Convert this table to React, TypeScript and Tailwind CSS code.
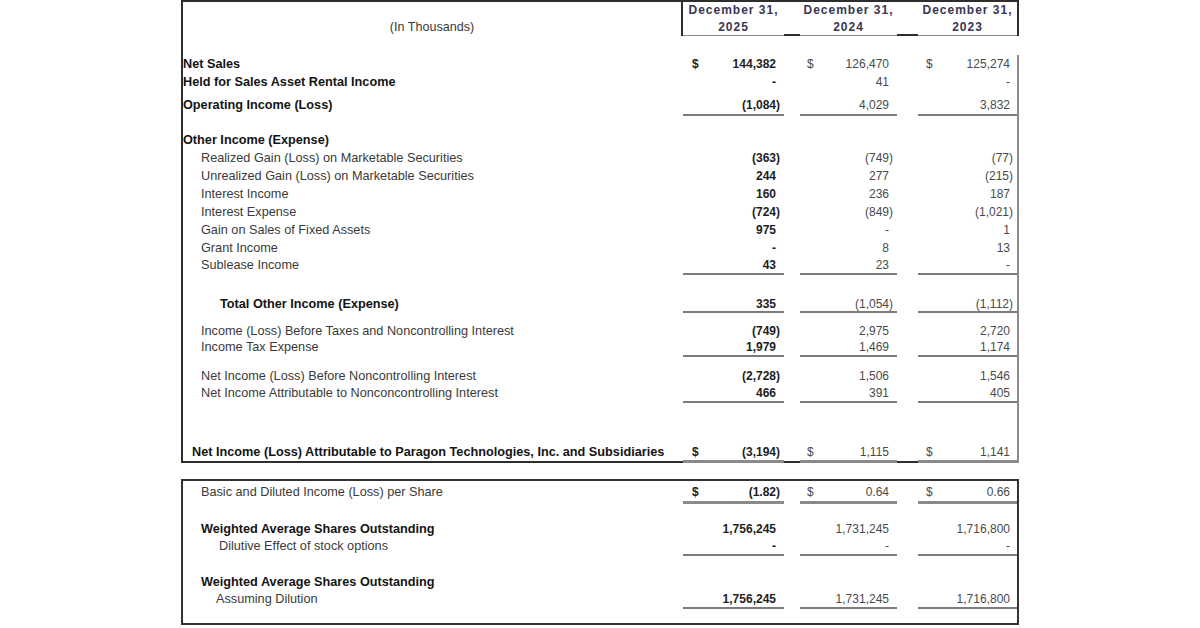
type Line = 'none' | 'single' | 'thick' | 'boxed'

interface RowDef {
  label: string
  pl: string
  bold?: boolean
  values?: [string, string, string]
  dollar?: boolean
  line?: Line
  mt: string
  lh: string
}

const upperRows: RowDef[] = [
  { label: 'Net Sales', pl: 'pl-0', bold: true, values: ['144,382', '126,470', '125,274'], dollar: true, mt: 'mt-[19px]', lh: 'leading-[18px]' },
  { label: 'Held for Sales Asset Rental Income', pl: 'pl-0', bold: true, values: ['-', '41', '-'], mt: 'mt-0', lh: 'leading-[18px]' },
  { label: 'Operating Income (Loss)', pl: 'pl-0', bold: true, values: ['(1,084)', '4,029', '3,832'], line: 'single', mt: 'mt-[5px]', lh: 'leading-[18px]' },
  { label: 'Other Income (Expense)', pl: 'pl-0', bold: true, mt: 'mt-[15px]', lh: 'leading-[18px]' },
  { label: 'Realized Gain (Loss) on Marketable Securities', pl: 'pl-[18px]', values: ['(363)', '(749)', '(77)'], mt: 'mt-0', lh: 'leading-[18px]' },
  { label: 'Unrealized Gain (Loss) on Marketable Securities', pl: 'pl-[18px]', values: ['244', '277', '(215)'], mt: 'mt-0', lh: 'leading-[18px]' },
  { label: 'Interest Income', pl: 'pl-[18px]', values: ['160', '236', '187'], mt: 'mt-0', lh: 'leading-[18px]' },
  { label: 'Interest Expense', pl: 'pl-[18px]', values: ['(724)', '(849)', '(1,021)'], mt: 'mt-0', lh: 'leading-[18px]' },
  { label: 'Gain on Sales of Fixed Assets', pl: 'pl-[18px]', values: ['975', '-', '1'], mt: 'mt-0', lh: 'leading-[18px]' },
  { label: 'Grant Income', pl: 'pl-[18px]', values: ['-', '8', '13'], mt: 'mt-0', lh: 'leading-[18px]' },
  { label: 'Sublease Income', pl: 'pl-[18px]', values: ['43', '23', '-'], line: 'single', mt: 'mt-0', lh: 'leading-[16px]' },
  { label: 'Total Other Income (Expense)', pl: 'pl-[37px]', bold: true, values: ['335', '(1,054)', '(1,112)'], line: 'single', mt: 'mt-[22px]', lh: 'leading-[14px]' },
  { label: 'Income (Loss) Before Taxes and Noncontrolling Interest', pl: 'pl-[18px]', values: ['(749)', '2,975', '2,720'], mt: 'mt-[9px]', lh: 'leading-[18px]' },
  { label: 'Income Tax Expense', pl: 'pl-[18px]', values: ['1,979', '1,469', '1,174'], line: 'single', mt: 'mt-0', lh: 'leading-[15px]' },
  { label: 'Net Income (Loss) Before Noncontrolling Interest', pl: 'pl-[18px]', values: ['(2,728)', '1,506', '1,546'], mt: 'mt-[10px]', lh: 'leading-[18px]' },
  { label: 'Net Income Attributable to Nonconcontrolling Interest', pl: 'pl-[18px]', values: ['466', '391', '405'], line: 'single', mt: 'mt-0', lh: 'leading-[16px]' },
  { label: 'Net Income (Loss) Attributable to Paragon Technologies, Inc. and Subsidiaries', pl: 'pl-[9px]', bold: true, values: ['(3,194)', '1,115', '1,141'], dollar: true, line: 'boxed', mt: 'mt-[42px]', lh: 'leading-[15px]' },
]

const lowerRows: RowDef[] = [
  { label: 'Basic and Diluted Income (Loss) per Share', pl: 'pl-[18px]', values: ['(1.82)', '0.64', '0.66'], dollar: true, line: 'thick', mt: 'mt-[2px]', lh: 'leading-[18px]' },
  { label: 'Weighted Average Shares Outstanding', pl: 'pl-[18px]', bold: true, values: ['1,756,245', '1,731,245', '1,716,800'], mt: 'mt-[16px]', lh: 'leading-[18px]' },
  { label: 'Dilutive Effect of stock options', pl: 'pl-[36px]', values: ['-', '-', '-'], line: 'single', mt: 'mt-0', lh: 'leading-[16px]' },
  { label: 'Weighted Average Shares Outstanding', pl: 'pl-[18px]', bold: true, mt: 'mt-[17px]', lh: 'leading-[18px]' },
  { label: 'Assuming Dilution', pl: 'pl-[33px]', values: ['1,756,245', '1,731,245', '1,716,800'], line: 'single', mt: 'mt-0', lh: 'leading-[16px]' },
]

const cols = [
  { w: 'w-[101px] pl-[9px] pr-[4px]', pos: 'pr-[4px]', text: 'font-bold text-[#1e1e1e]' },
  { w: 'w-[97px] pl-[7px] pr-[4px]', pos: 'pr-[4px]', text: 'text-[#4a4a4a]' },
  { w: 'w-[99px] pl-[8px] pr-[4px]', pos: 'pr-[3px]', text: 'text-[#4a4a4a]' },
]

function lineClass(line: Line) {
  if (line === 'single') return 'border-b-2 border-[#7c7c7c]'
  if (line === 'thick' || line === 'boxed') return 'border-b-[3px] border-[#8a8a8a]'
  return ''
}

function Row({ row }: { row: RowDef }) {
  const line = row.line ?? 'none'
  const boxed = line === 'boxed'
  const gap = boxed ? 'border-b-2 border-[#2e2e2e]' : ''
  return (
    <div className={`flex ${row.mt} ${row.lh}`}>
      <div
        className={`w-[500px] text-[12.7px] whitespace-nowrap ${row.pl} ${boxed ? 'border-b-2 border-[#2e2e2e]' : ''} ${
          row.bold ? 'font-bold text-[#141414]' : 'text-[#3a3a3a]'
        }`}
      >
        {row.label}
      </div>
      {cols.map((c, i) => {
        const v = row.values?.[i]
        const neg = v?.startsWith('(')
        return (
          <div key={i} className="flex">
            <div className={`${c.w} ${c.text} flex justify-between ${row.values ? lineClass(line) : ''}`}>
              <span>{row.dollar ? '$' : ''}</span>
              <span className={neg ? '' : c.pos}>{v ?? ''}</span>
            </div>
            {i === 0 && <div className={`w-[16px] ${gap}`} />}
            {i === 1 && <div className={`w-[21px] ${gap}`} />}
          </div>
        )
      })}
    </div>
  )
}

function HeaderCell({ year, w }: { year: string; w: string }) {
  return (
    <div className={`${w} flex flex-col items-center border-b border-[#8a8a8a] font-bold text-[#3a3552] tracking-[1px]`}>
      <span className="leading-[17px]">December 31,</span>
      <span className="leading-[16px]">{year}</span>
    </div>
  )
}

export default function App() {
  return (
    <div className="w-[1200px] h-[628px] bg-white overflow-hidden font-['Liberation_Sans',Arial,sans-serif] text-[12px]">
      <div className="mx-auto w-[838px]">
        {/* income statement box */}
        <div className="border-l-2 border-t-2 border-[#2e2e2e]">
          <div className="flex h-[34px] border-r-2 border-[#2e2e2e]">
            <div className="w-[500px] border-r-2 border-[#2e2e2e] pt-[17px] text-center text-[12.6px] leading-[16px] text-[#3a3a3a]">
              (In Thousands)
            </div>
            <HeaderCell year="2025" w="w-[101px]" />
            <div className="w-[16px] border-b-2 border-[#2e2e2e]" />
            <HeaderCell year="2024" w="w-[97px]" />
            <div className="w-[21px] border-b-2 border-[#2e2e2e]" />
            <HeaderCell year="2023" w="w-[99px]" />
          </div>
          <div className="border-r-2 border-[#8c8c8c]">
            {upperRows.map((r, i) => (
              <Row key={i} row={r} />
            ))}
          </div>
        </div>

        {/* per share box */}
        <div className="mt-[16px] border-2 border-[#333] pb-[14px]">
          {lowerRows.map((r, i) => (
            <Row key={i} row={r} />
          ))}
        </div>
      </div>
    </div>
  )
}
